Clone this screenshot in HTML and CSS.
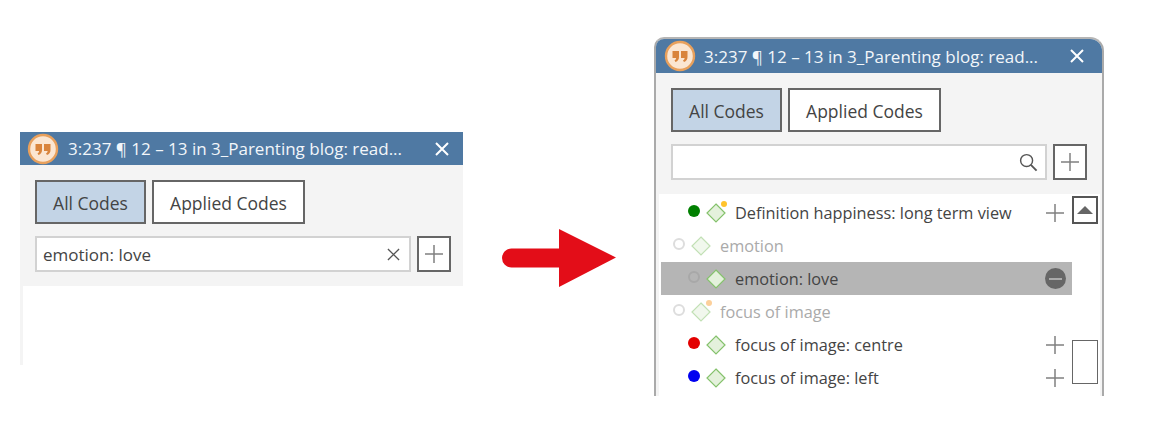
FILE: index.html
```html
<!DOCTYPE html>
<html lang="en">
<head>
<meta charset="utf-8">
<title>Code picker</title>
<link rel="stylesheet" href="styles.css">
</head>
<body>
<svg class="defs" width="0" height="0" aria-hidden="true">
  <symbol id="quote" viewBox="0 0 32 32">
    <circle cx="16" cy="16" r="14" fill="#fbe6d2" stroke="#e8a05c" stroke-width="2.4"/>
    <path d="M8.5 11h6.500v6q0 3.500-3.500 5l-1-1.500q1.500-1 1.700-2.500h-3.700zM17 11h6.500v6q0 3.500-3.500 5l-1-1.500q1.500-1 1.700-2.500H17z" fill="#d9843c"/>
  </symbol>
  <symbol id="close" viewBox="0 0 14 14">
    <path d="M1 1l12 12M13 1L1 13" fill="none" stroke="currentColor"/>
  </symbol>
  <symbol id="plus" viewBox="0 0 18 18">
    <path d="M9 0v18M0 9h18" fill="none" stroke="#808080" stroke-width="1.500"/>
  </symbol>
  <symbol id="diamond" viewBox="0 0 20 20">
    <path d="M10 1L19 10L10 19L1 10z" fill="#e4f1dc" stroke="#85c26c" stroke-width="1.200"/>
  </symbol>
  <symbol id="search" viewBox="0 0 20 20">
    <circle cx="8" cy="8" r="6.300" fill="none" stroke="#555" stroke-width="1.500"/>
    <path d="M12.500 12.500L18.500 18.500" stroke="#555" stroke-width="2"/>
  </symbol>
</svg>

<main class="stage">
  <section class="panel panel-before">
    <header class="titlebar">
      <svg class="quote-icon"><use href="#quote"/></svg>
      <span class="title">3:237 ¶ 12 – 13 in 3_Parenting blog: read...</span>
      <svg class="close-icon"><use href="#close"/></svg>
    </header>
    <div class="tools">
      <div class="tabs">
        <button class="tab tab-active">All Codes</button>
        <button class="tab tab-applied">Applied Codes</button>
      </div>
      <div class="search-row">
        <div class="search">
          <span class="search-text">emotion: love</span>
          <svg class="clear-icon"><use href="#close"/></svg>
        </div>
        <button class="add"><svg class="plus-icon"><use href="#plus"/></svg></button>
      </div>
    </div>
    <div class="tail"></div>
  </section>

  <svg class="arrow" viewBox="0 0 114 58" aria-hidden="true">
    <path d="M57 0L114 28.500L57 58V38.500H9.500a9.500 9.500 0 0 1 0-19H57z" fill="#e30d18"/>
  </svg>

  <section class="panel panel-after">
    <header class="titlebar">
      <svg class="quote-icon"><use href="#quote"/></svg>
      <span class="title">3:237 ¶ 12 – 13 in 3_Parenting blog: read...</span>
      <svg class="close-icon"><use href="#close"/></svg>
    </header>
    <div class="tools">
      <div class="tabs">
        <button class="tab tab-active">All Codes</button>
        <button class="tab tab-applied">Applied Codes</button>
      </div>
      <div class="search-row">
        <div class="search">
          <span class="search-text"></span>
          <svg class="search-icon"><use href="#search"/></svg>
        </div>
        <button class="add"><svg class="plus-icon"><use href="#plus"/></svg></button>
      </div>
    </div>
    <div class="list">
      <ul class="rows">
        <li class="row">
          <span class="dot dot-green"></span>
          <span class="code-icon"><svg class="diamond"><use href="#diamond"/></svg><i class="mark mark-yellow"></i></span>
          <span class="label">Definition happiness: long term view</span>
          <svg class="plus-icon"><use href="#plus"/></svg>
        </li>
        <li class="row row-parent">
          <span class="dot dot-empty"></span>
          <span class="code-icon"><svg class="diamond"><use href="#diamond"/></svg></span>
          <span class="label">emotion</span>
        </li>
        <li class="row row-selected">
          <span class="dot dot-empty"></span>
          <span class="code-icon"><svg class="diamond"><use href="#diamond"/></svg></span>
          <span class="label">emotion: love</span>
          <span class="remove"></span>
        </li>
        <li class="row row-parent">
          <span class="dot dot-empty"></span>
          <span class="code-icon"><svg class="diamond"><use href="#diamond"/></svg><i class="mark mark-orange"></i></span>
          <span class="label">focus of image</span>
        </li>
        <li class="row">
          <span class="dot dot-red"></span>
          <span class="code-icon"><svg class="diamond"><use href="#diamond"/></svg></span>
          <span class="label">focus of image: centre</span>
          <svg class="plus-icon"><use href="#plus"/></svg>
        </li>
        <li class="row">
          <span class="dot dot-blue"></span>
          <span class="code-icon"><svg class="diamond"><use href="#diamond"/></svg></span>
          <span class="label">focus of image: left</span>
          <svg class="plus-icon"><use href="#plus"/></svg>
        </li>
      </ul>
      <div class="scrollbar">
        <button class="scroll-up"><span class="triangle"></span></button>
        <div class="thumb"></div>
      </div>
    </div>
  </section>
</main>
</body>
</html>
```

FILE: styles.css
```css
* {
  box-sizing: border-box;
}

html,
body {
  margin: 0;
  padding: 0;
  background: #fff;
}

body {
  width: 1156px;
  height: 433px;
  overflow: hidden;
  font-family: "Open Sans", "Noto Sans", sans-serif;
  color: #444;
}

.defs {
  display: block;
  height: 0;
}

.stage {
  display: flex;
  align-items: flex-start;
}

.panel {
  display: flex;
  flex-direction: column;
  flex: none;
}

.panel-before {
  width: 443px;
  margin: 132px 0 0 20px;
}

.panel-after {
  width: 450px;
  height: 359px;
  margin: 37px 0 0 38px;
  border: solid #aaa;
  border-width: 2px 2px 0;
  border-top-color: #b5b5b5;
  border-top-right-radius: 14px;
  border-top-left-radius: 10px;
  background: #f4f4f4;
  overflow: hidden;
}

.arrow {
  flex: none;
  width: 114px;
  height: 58px;
  margin: 229px 0 0 39px;
}

.titlebar {
  display: flex;
  align-items: center;
  height: 33px;
  padding: 0 14px 0 7px;
  background: #4f79a3;
  color: #fff;
  flex: none;
}

.panel-after .titlebar {
  height: 34px;
  padding: 0 18px 0 8px;
}

.panel-after .title {
  margin-left: 8px;
}

.quote-icon {
  width: 32px;
  height: 32px;
  flex: none;
}

.title {
  flex: 1;
  margin-left: 9px;
  font-size: 17px;
  white-space: nowrap;
  color: #f2f6fa;
}

.close-icon {
  width: 14px;
  height: 14px;
  color: #fff;
  stroke-width: 2;
  flex: none;
}

.tools {
  display: flex;
  flex-direction: column;
  gap: 12px;
  padding: 15px 12px 14px 15px;
  background: #f4f4f4;
}

.tabs {
  display: flex;
  gap: 6px;
}

.tab {
  height: 44px;
  padding: 2px 0 0;
  border: 2px solid #666;
  background: #fff;
  color: #444;
  font: inherit;
  font-size: 17.5px;
}

.tab-active {
  width: 111px;
  background: #c3d4e6;
}

.tab-applied {
  width: 153px;
}

.search-row {
  display: flex;
  gap: 6px;
}

.search {
  display: flex;
  align-items: center;
  justify-content: space-between;
  width: 376px;
  height: 36px;
  padding: 0 9px 0 6px;
  border: 2px solid #d2d2d2;
  background: #fff;
  font-size: 17px;
}

.clear-icon {
  width: 13px;
  height: 13px;
  color: #555;
  stroke-width: 1.4;
}

.search-icon {
  width: 19px;
  height: 19px;
  margin-right: -2px;
}

.add {
  display: flex;
  align-items: center;
  justify-content: center;
  width: 34px;
  height: 36px;
  padding: 0 1px 0 0;
  border: 2px solid #666;
  background: #fff;
}

.plus-icon {
  width: 18px;
  height: 18px;
  flex: none;
}

.tail {
  width: 3px;
  height: 79px;
  background: #f4f4f4;
}

.list {
  display: flex;
  flex: 1;
  min-height: 0;
  margin: 0 2px 0 3px;
  padding-top: 2px;
  background: #fff;
  overflow: hidden;
}

.rows {
  width: 411px;
  flex: none;
  margin: 0 0 0 2px;
  padding: 0;
  list-style: none;
}

.row {
  display: flex;
  align-items: center;
  height: 33px;
  padding: 0 8px 0 27px;
  font-size: 16.3px;
  color: #444;
}

.row-parent {
  padding-left: 12px;
  color: #aaa;
}

.row-parent .diamond {
  opacity: 0.5;
}

.row-selected {
  background: #b5b5b5;
}

.dot {
  width: 12px;
  height: 12px;
  border-radius: 50%;
  margin-top: -3px;
  flex: none;
}

.dot-green {
  background: #008000;
}

.dot-red {
  background: #e30000;
}

.dot-blue {
  background: #0000f0;
}

.dot-empty {
  border: 2px solid #ddd;
  background: #fff;
}

.row-selected .dot-empty {
  border-color: #a8a8a8;
  background: transparent;
}

.code-icon {
  position: relative;
  display: block;
  width: 20px;
  height: 20px;
  margin-left: 6px;
  flex: none;
}

.diamond {
  display: block;
  width: 20px;
  height: 20px;
}

.mark {
  position: absolute;
  top: -2px;
  right: -1px;
  width: 6px;
  height: 6px;
  border-radius: 50%;
}

.mark-yellow {
  background: #ffc32b;
}

.mark-orange {
  background: #fcd09b;
}

.label {
  flex: 1;
  margin-left: 9px;
  white-space: nowrap;
}

.remove {
  position: relative;
  width: 21px;
  height: 21px;
  margin-right: -2px;
  border-radius: 50%;
  background: #666;
  flex: none;
}

.remove::after {
  content: "";
  position: absolute;
  left: 4px;
  right: 4px;
  top: 10px;
  height: 1.500px;
  background: #aaa;
}

.scrollbar {
  display: flex;
  flex-direction: column;
  width: 26px;
  flex: none;
}

.scroll-up {
  display: flex;
  align-items: center;
  justify-content: center;
  width: 26px;
  height: 28px;
  padding: 0;
  border: 2px solid #555;
  background: #fff;
}

.triangle {
  width: 0;
  height: 0;
  border-left: 8px solid transparent;
  border-right: 8px solid transparent;
  border-bottom: 8px solid #666;
}

.thumb {
  width: 26px;
  height: 44px;
  margin-top: 116px;
  border: 1px solid #666;
  background: #fff;
}
```
